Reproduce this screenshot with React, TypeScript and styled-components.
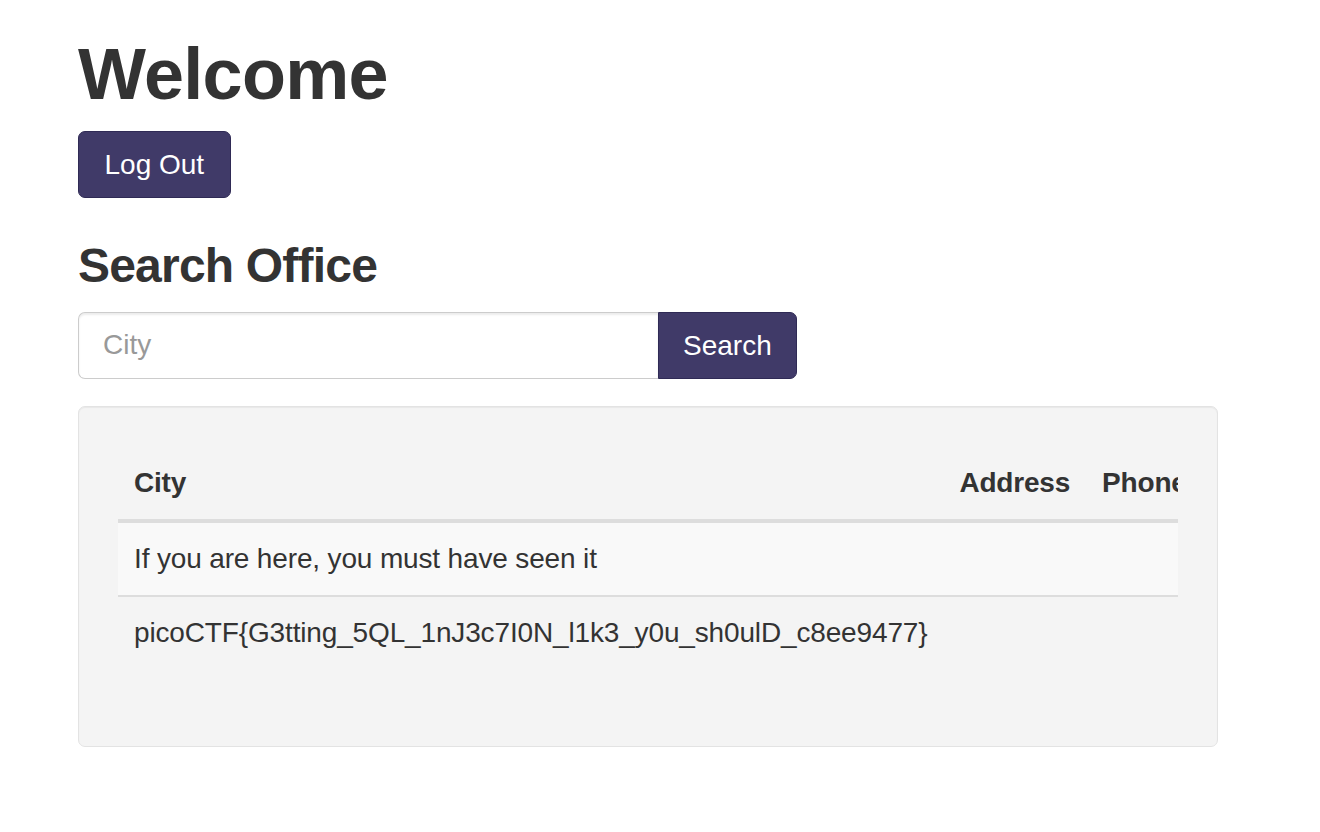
import React from "react";
import styled, { createGlobalStyle } from "styled-components";

const GlobalStyle = createGlobalStyle`
  html, body {
    margin: 0;
    padding: 0;
    background: #ffffff;
  }
  body {
    font-family: "Liberation Sans", Arial, Helvetica, sans-serif;
    font-size: 28px;
    line-height: 40px;
    color: #333333;
  }
  * { box-sizing: border-box; }
`;

const Container = styled.div`
  width: 1218px;
  padding: 35px 0 0 78px;
`;

const Title = styled.h1`
  margin: 0 0 17px;
  font-size: 72px;
  line-height: 1.1;
  font-weight: 700;
  letter-spacing: -0.7px;
  color: #333333;
`;

const SectionTitle = styled.h3`
  margin: 42px 0 19px;
  font-size: 48px;
  line-height: 1.1;
  font-weight: 700;
  letter-spacing: -0.8px;
  color: #333333;
`;

const PrimaryButton = styled.button<{ $attached?: boolean }>`
  display: inline-block;
  height: 67px;
  padding: 0 ${(p) => (p.$attached ? "24px" : "25.5px")};
  font-family: inherit;
  font-size: 28px;
  line-height: 65px;
  color: #ffffff;
  background: #403a68;
  border: 1px solid #2f2a55;
  border-radius: ${(p) => (p.$attached ? "0 7px 7px 0" : "7px")};
  cursor: pointer;
`;

const InputGroup = styled.form`
  display: flex;
  height: 67px;
  margin: 0;
`;

const CityInput = styled.input`
  width: 580px;
  height: 67px;
  padding: 0 24px;
  font-family: inherit;
  font-size: 28px;
  color: #555555;
  background: #ffffff;
  border: 1px solid #cccccc;
  border-right: none;
  border-radius: 7px 0 0 7px;
  box-shadow: inset 0 2px 2px rgba(0, 0, 0, 0.075);
  outline: none;
  &::placeholder {
    color: #999999;
  }
`;

const Well = styled.div`
  width: 1140px;
  margin-top: 27px;
  padding: 40px 39px 40px 39px;
  background: #f4f4f4;
  border: 1px solid #e3e3e3;
  border-radius: 7px;
  box-shadow: inset 0 1px 1px rgba(0, 0, 0, 0.05);
`;

const TableScroll = styled.div`
  width: 100%;
  overflow: hidden;
  margin-bottom: 37px;
`;

const Table = styled.table`
  width: 100%;
  border-collapse: separate;
  border-spacing: 0;
`;

const HeadCell = styled.th`
  padding: 16px;
  text-align: left;
  font-weight: 700;
  white-space: nowrap;
  line-height: 40px;
  letter-spacing: -0.2px;
  border-bottom: 4px solid #dddddd;
  vertical-align: bottom;
`;

const Row = styled.tr<{ $striped?: boolean; $divided?: boolean }>`
  background: ${(p) => (p.$striped ? "#f9f9f9" : "transparent")};
  & > td {
    border-top: ${(p) => (p.$divided ? "2px solid #dddddd" : "none")};
  }
`;

const Cell = styled.td`
  padding: 16px;
  line-height: 40px;
  letter-spacing: -0.15px;
  vertical-align: top;
`;

export default function App() {
  return (
    <>
      <GlobalStyle />
      <Container>
        <Title>Welcome</Title>
        <PrimaryButton type="button">Log Out</PrimaryButton>
        <SectionTitle>Search Office</SectionTitle>
        <InputGroup onSubmit={(e) => e.preventDefault()}>
          <CityInput type="text" placeholder="City" />
          <PrimaryButton type="submit" $attached>
            Search
          </PrimaryButton>
        </InputGroup>
        <Well>
          <TableScroll>
            <Table>
              <thead>
                <tr>
                  <HeadCell>City</HeadCell>
                  <HeadCell>Address</HeadCell>
                  <HeadCell>Phone</HeadCell>
                </tr>
              </thead>
              <tbody>
                <Row $striped>
                  <Cell>If you are here, you must have seen it</Cell>
                  <Cell></Cell>
                  <Cell></Cell>
                </Row>
                <Row $divided>
                  <Cell>picoCTF{"{"}G3tting_5QL_1nJ3c7I0N_l1k3_y0u_sh0ulD_c8ee9477{"}"}</Cell>
                  <Cell></Cell>
                  <Cell></Cell>
                </Row>
              </tbody>
            </Table>
          </TableScroll>
        </Well>
      </Container>
    </>
  );
}
